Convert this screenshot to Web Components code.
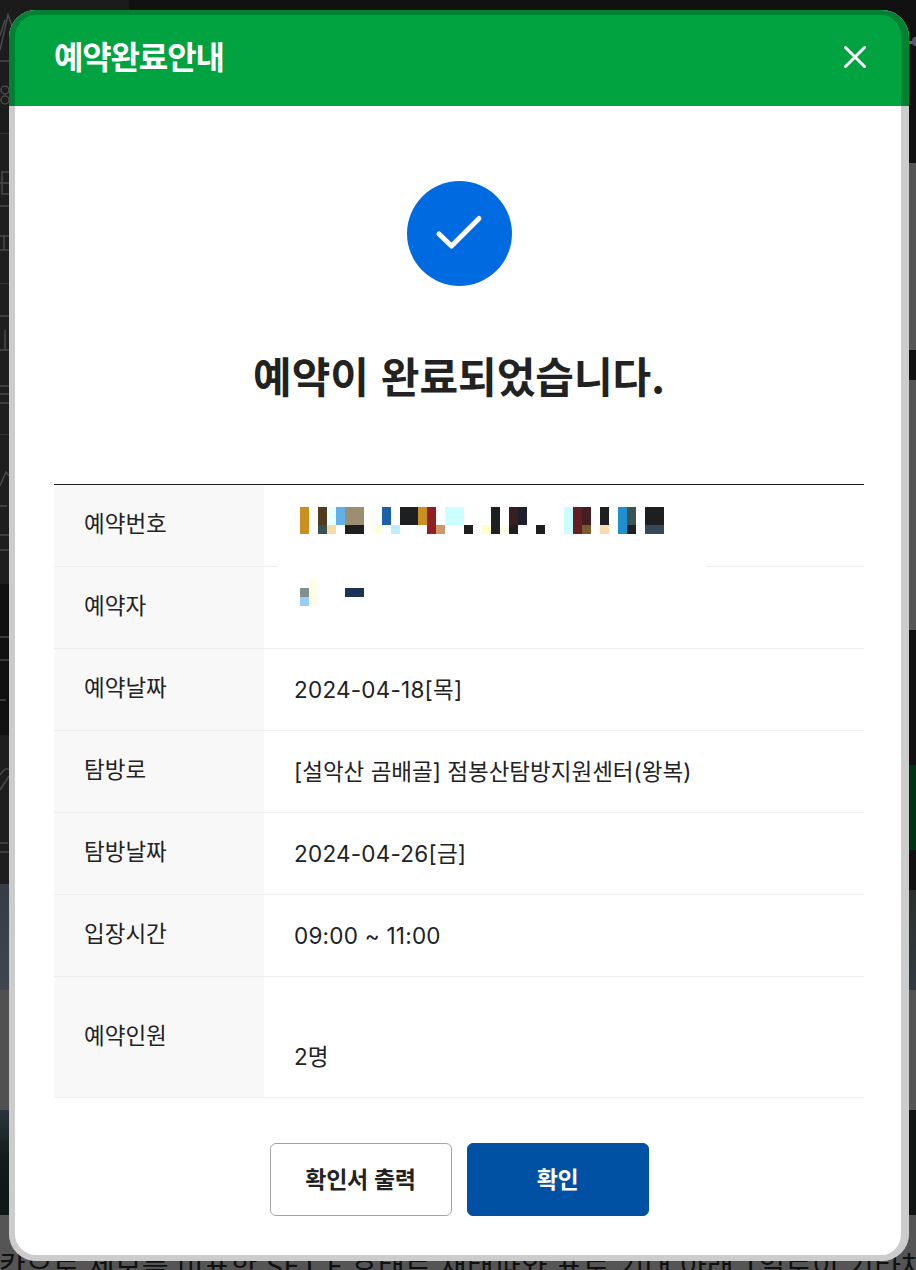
<!DOCTYPE html>
<html lang="ko"><head><meta charset="utf-8">
<style>
html,body{margin:0;padding:0;background:#111}
body{width:916px;height:1270px;overflow:hidden;position:relative;font-family:Inter,"Noto Sans CJK KR","Noto Sans",sans-serif}
</style></head><body>
<page-backdrop></page-backdrop>
<reservation-dialog heading="예약완료안내">
  <check-badge></check-badge>
  <span slot="message">예약이 완료되었습니다.</span>
  <info-row label="예약번호" mask="number"></info-row>
  <info-row label="예약자" mask="name"></info-row>
  <info-row label="예약날짜" wide>2024-04-18[목]</info-row>
  <info-row label="탐방로">[설악산 곰배골] 점봉산탐방지원센터(왕복)</info-row>
  <info-row label="탐방날짜" wide>2024-04-26[금]</info-row>
  <info-row label="입장시간" wide>09:00 ~ 11:00</info-row>
  <info-row label="예약인원" tall>2명</info-row>
  <action-button slot="actions">확인서 출력</action-button>
  <action-button slot="actions" primary>확인</action-button>
</reservation-dialog>
<script>
const el=(html)=>{const t=document.createElement('template');t.innerHTML=html;return t.content;};

customElements.define('page-backdrop',class extends HTMLElement{
  constructor(){super();this.attachShadow({mode:'open'}).append(el(`
  <style>
  :host{position:absolute;inset:0;display:flex;background:#111;overflow:hidden}
  .col{display:flex;flex-direction:column}
  .l{width:129px}.m{flex:1}.r{width:24px}
  .b{flex:none}
  .sep{border-bottom:1px solid #333;box-sizing:border-box}
  .foot{position:absolute;left:-1px;top:1244px;white-space:nowrap;font-size:29px;line-height:40px;color:#101010;letter-spacing:.2px;font-family:"Noto Sans CJK KR",sans-serif}
  svg{position:absolute;left:0;top:0}
  .dot{position:absolute;left:909px;top:41px;width:4px;height:3px;background:#666}
  .dot2{position:absolute;left:912px;top:37px;width:6px;height:9px;border-radius:50%;background:#556}
  </style>
  <div class="col l">
    <div class="b" style="height:10px;background:#1b1b1b"></div>
    <div class="b sep" style="height:124px;background:#1c1c1c"></div>
    <div class="b sep" style="height:150px;background:#1e1e1e"></div>
    <div class="b sep" style="height:151px;background:#1e1e1e"></div>
    <div class="b" style="height:149px;background:#1e1e1e"></div>
    <div class="b" style="height:151px;background:#111"></div>
    <div class="b" style="height:149px;background:#1e1e1e"></div>
    <div class="b" style="height:106px;background:linear-gradient(#363c45,#3f4650)"></div>
    <div class="b" style="height:120px;background:#505050"></div>
    <div class="b" style="height:105px;background:linear-gradient(#2b3540,#121c1c 45%,#0f1716)"></div>
    <div class="b" style="flex:1;background:#555"></div>
  </div>
  <div class="col m">
    <div class="b" style="height:1215px;background:#111"></div>
    <div class="b" style="flex:1;background:#555"></div>
  </div>
  <div class="col r">
    <div class="b" style="height:163px;background:#111"></div>
    <div class="b" style="height:187px;background:#555"></div>
    <div class="b" style="height:30px;background:#111"></div>
    <div class="b" style="height:250px;background:#555"></div>
    <div class="b" style="height:135px;background:#111"></div>
    <div class="b" style="height:85px;background:#003316"></div>
    <div class="b" style="height:40px;background:#111"></div>
    <div class="b" style="height:100px;background:linear-gradient(#2a302c,#333b42)"></div>
    <div class="b" style="height:120px;background:#555"></div>
    <div class="b" style="height:105px;background:#101413"></div>
    <div class="b" style="flex:1;background:#555"></div>
  </div>
  <svg width="12" height="860" fill="none" stroke="#4a4a4a" stroke-width="1.5">
    <path d="M0 50 L8 15 L12 26M0 36 L5 20"/>
    <path d="M0 61H9"/>
    <circle cx="5" cy="90" r="4"/><circle cx="5" cy="100" r="4"/>
    <path d="M9 172H2V194H9M0 183H9M0 206H9M0 236H9M0 250H9M4 236V250"/>
    <path d="M0 316H9M0 350H9M5 330V350M0 386H9M0 394H9M0 403H9"/>
    <path d="M0 486L6 472 9 476M0 506H7M0 535H9M0 550H9"/>
    <path d="M0 637H9M0 660H9M0 700H6"/>
    <path d="M0 775C4 768 8 768 9 770M0 790L9 776M0 843H8M0 852H9"/>
  </svg>
  <div class="dot"></div><div class="dot2"></div>
  <div class="foot">칸으로 제보를 미표항 SET F 호태트 채태파와 표로 기대 아래 1일로이 기타채를 차</div>
  `));}
});

customElements.define('reservation-dialog',class extends HTMLElement{
  constructor(){super();this.attachShadow({mode:'open'}).append(el(`
  <style>
  :host{position:absolute;left:9px;top:10px;width:900px;height:1251px;display:flex;flex-direction:column;background:#fff;border-radius:27px;overflow:hidden;color:#222}
  :host::after{content:"";position:absolute;inset:0;box-sizing:border-box;border:solid rgba(0,0,0,.2);border-width:5px 8px 6px 6px;border-radius:27px;pointer-events:none}
  header{flex:none;height:96px;background:#00a33f;display:flex;align-items:center;justify-content:space-between;padding:0 41px 0 45px;color:#fff}
  h1{margin:-6px 0 0;font-size:32px;font-weight:700;letter-spacing:-1.15px;line-height:96px;font-family:"Noto Sans CJK KR",sans-serif}
  header svg{display:block;margin-top:-3px}
  .body{flex:1;display:flex;flex-direction:column;align-items:center;padding:75px 45px 0}
  .msg{margin-top:59px;font-size:42px;font-weight:700;line-height:60px;letter-spacing:0;color:#222;font-family:"Noto Sans CJK KR",sans-serif}
  .table{align-self:stretch;margin-top:79px;border-top:1px solid #222}
  .actions{display:flex;gap:15px;margin-top:45px}
  </style>
  <header><h1></h1>
    <svg width="26" height="26" viewBox="0 0 26 26" fill="none" stroke="#fff" stroke-width="3" stroke-linecap="round"><path d="M3.5 3.5 22.5 22.5M22.5 3.5 3.5 22.5"/></svg>
  </header>
  <div class="body">
    <slot name="badge"></slot>
    <div class="msg"><slot name="message"></slot></div>
    <div class="table"><slot name="rows"></slot></div>
    <div class="actions"><slot name="actions"></slot></div>
  </div>`));
  }
  connectedCallback(){
    this.shadowRoot.querySelector('h1').textContent=this.getAttribute('heading');
    queueMicrotask(()=>{for(const c of this.children){
      if(c.localName==='check-badge')c.slot='badge';
      if(c.localName==='info-row')c.slot='rows';
    }});
  }
});

customElements.define('check-badge',class extends HTMLElement{
  constructor(){super();this.attachShadow({mode:'open'}).append(el(`
  <style>:host{display:block;width:105px;height:105px}svg{display:block}</style>
  <svg width="105" height="105" viewBox="0 0 105 105"><circle cx="52.5" cy="52.5" r="52.5" fill="#006be0"/>
  <path d="M32 53 44.5 65 72 37.5" fill="none" stroke="#fff" stroke-width="5" stroke-linecap="round" stroke-linejoin="round"/></svg>`));}
});

const masks={
 number:{cells:[
 [300,507,27,'#c9901f'],[318,507,18,'#503c1e'],[318,525,9,'#3b514f'],[327,507,18,'#eaffff'],[327,525,9,'#f8dca8'],[336,507,18,'#62b0ea'],
 [345,507,18,'#9c8e70',19],[345,525,9,'#1e1f20',19],[373,525,9,'#ffffd8'],[382,507,18,'#1c61a6'],[391,525,9,'#c0ecff'],[400,507,18,'#1e1f20',18],
 [418,507,18,'#c9901f'],[427,507,27,'#8f1f24'],[436,525,9,'#cf9966'],[445,507,18,'#ccffff',19],[464,525,9,'#1e1f20'],[482,525,9,'#ffffcc'],
 [491,507,27,'#1e1f20'],[500,525,9,'#ffffe8'],[509,507,18,'#3a1f22'],[509,525,9,'#1e1f20'],[518,507,18,'#1e2030'],[536,525,9,'#1e1f20'],
 [564,507,27,'#ccffff'],[573,507,27,'#661e22'],[582,507,18,'#431f24'],[582,525,9,'#7c5c2c'],[600,507,18,'#1e1f20'],[600,525,9,'#f8dcb0'],
 [618,507,27,'#1c90d0'],[627,507,18,'#3c5450'],[627,525,9,'#1e1f20'],[645,507,18,'#1e1f20',19],[645,525,9,'#34495a',19]]},
 name:{cells:[[300,588,9,'#7f908c'],[300,597,9,'#99ccff'],[309,579,27,'#ffffe8'],[345,588,9,'#1c3358',19]]}
};

customElements.define('info-row',class extends HTMLElement{
  constructor(){super();this.attachShadow({mode:'open'}).append(el(`
  <style>
  :host{display:flex;height:82px;box-sizing:border-box;border-bottom:1px solid #eee;position:relative;font-size:22.5px;line-height:33px;color:#222}
  :host([tall]){height:121px}
  .th{flex:none;width:210px;box-sizing:border-box;padding-left:30px;background:#f8f8f8;display:flex;align-items:center;padding-bottom:4px}
  .td{flex:1;padding-left:30px;display:flex;align-items:center}
  :host([wide]) .td{letter-spacing:.23px}
  :host([tall]) .td{align-items:flex-end;padding-bottom:24px}
  svg{position:absolute;left:0;top:0;overflow:visible;display:none}
  </style>
  <div class="th"></div><div class="td"><slot></slot></div>
  <svg width="810" height="82"></svg>`));}
  connectedCallback(){
    const r=this.shadowRoot;
    r.querySelector('.th').textContent=this.getAttribute('label');
    const k=this.getAttribute('mask');
    if(k){
      const s=r.querySelector('svg');s.style.display='block';
      s.setAttribute('viewBox', k==='number'?'54 485 810 82':'54 567 810 82');
      let h='';
      if(k==='number')h+=`<rect x="278" y="485" width="428" height="82.5" fill="#fff"/>`;
      for(const [x,y,ht,c,w] of masks[k].cells)h+=`<rect x="${x}" y="${y}" width="${w||9}" height="${ht}" fill="${c}"/>`;
      s.innerHTML=h;
    }
  }
});

customElements.define('action-button',class extends HTMLElement{
  constructor(){super();this.attachShadow({mode:'open'}).append(el(`
  <style>
  :host{display:flex;width:182px;height:73px;box-sizing:border-box;border:1px solid #a3a3a3;border-radius:6px;align-items:center;justify-content:center;padding-bottom:4px;font-size:23px;font-weight:700;color:#222;background:#fff;letter-spacing:-.3px;font-family:"Noto Sans CJK KR",sans-serif}
  :host([primary]){background:#0050a4;border-color:#0050a4;color:#fff}
  </style><slot></slot>`));}
});
</script>
</body></html>
